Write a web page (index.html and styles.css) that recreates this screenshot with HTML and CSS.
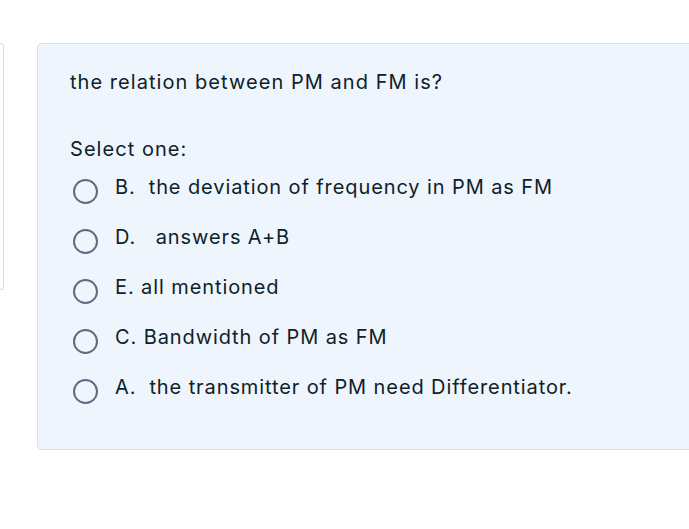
FILE: index.html
```html
<!DOCTYPE html>
<html>
<head>
<meta charset="utf-8">
<link rel="stylesheet" href="styles.css">
</head>
<body>
<div class="page">
  <div class="side"></div>
  <div class="card">
    <div class="qtext">the relation between PM and FM is?</div>
    <div class="prompt">Select one:</div>
    <div class="answers">
      <label class="opt"><span class="radio"></span><span class="lbl">B.&nbsp; the deviation of frequency in PM as FM</span></label>
      <label class="opt"><span class="radio"></span><span class="lbl">D.&nbsp;&nbsp; answers A+B</span></label>
      <label class="opt"><span class="radio"></span><span class="lbl">E. all mentioned</span></label>
      <label class="opt"><span class="radio"></span><span class="lbl">C. Bandwidth of PM as FM</span></label>
      <label class="opt"><span class="radio"></span><span class="lbl">A.&nbsp; the transmitter of PM need Differentiator.</span></label>
    </div>
  </div>
</div>
</body>
</html>
```
FILE: styles.css
```css
html, body {
  margin: 0;
  padding: 0;
  background: #ffffff;
}
body {
  font-family: Inter, "Noto Sans", sans-serif;
  color: #0f2129;
  width: 689px;
  height: 529px;
  overflow: hidden;
}
.page {
  display: flex;
  align-items: flex-start;
  padding-top: 43px;
}
.side {
  flex-shrink: 0;
  width: 4px;
  height: 247px;
  border: 1px solid #d3dbe6;
  border-left: none;
  border-radius: 0 3px 3px 0;
  box-sizing: border-box;
}
.card {
  margin-left: 33px;
  width: 700px;
  flex-shrink: 0;
  height: 407px;
  box-sizing: border-box;
  background: #eef5fd;
  border: 1px solid #cfe0f0;
  border-radius: 5px;
  padding: 25px 0 0 32px;
}
.qtext, .prompt {
  font-size: 20px;
  letter-spacing: 1.05px;
  line-height: 26px;
}
.lbl {
  font-size: 20px;
  letter-spacing: 0.9px;
  line-height: 26px;
  margin-top: -7px;
}
.prompt {
  margin-top: 41px;
}
.answers {
  display: flex;
  flex-direction: column;
  margin-top: 3px;
}
.opt {
  display: flex;
  align-items: center;
  height: 50px;
}
.radio {
  width: 25px;
  height: 25px;
  box-sizing: border-box;
  border: 2px solid #5f6a80;
  border-radius: 50%;
  margin: 2px 17px 0 3px;
  flex-shrink: 0;
}
```
